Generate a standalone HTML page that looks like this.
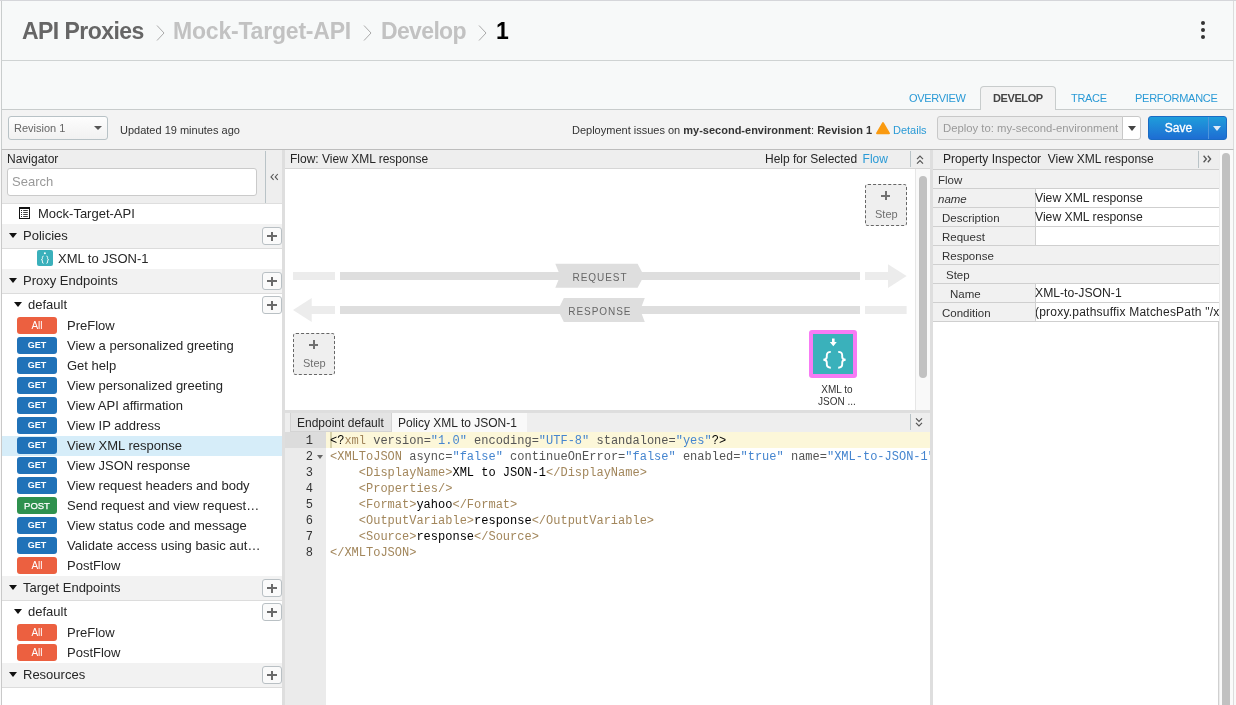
<!DOCTYPE html>
<html><head><meta charset="utf-8">
<style>
*{box-sizing:border-box;margin:0;padding:0}
html,body{width:1236px;height:705px;overflow:hidden;background:#f9f9f9;font-family:"Liberation Sans",sans-serif;color:#333}
.a{position:absolute;white-space:nowrap}
#page{position:absolute;left:0;top:0;width:1236px;height:705px;overflow:hidden;will-change:transform}
/* header */
#hdr{left:1px;top:0;width:1233px;height:61px;background:#f7f9f9;border-top:1px solid #d5d9d9;border-left:1px solid #c9cdcd;border-right:1px solid #dcdcdc;border-bottom:1px solid #cfd3d3}
.bc{top:18px;font-size:23px;font-weight:bold;line-height:26px}
.chev{top:25px;width:9px;height:16px}
#sub{left:1px;top:61px;width:1233px;height:49px;background:#f7f9f9;border-left:1px solid #c9cdcd;border-right:1px solid #dcdcdc;border-bottom:1px solid #c8cccc}
.tab{font-size:11px;color:#2a9ad6;top:91px;line-height:14px;letter-spacing:-0.3px}
#tb{left:1px;top:110px;width:1233px;height:40px;background:#f3f3f3;border-left:1px solid #c9cdcd;border-right:1px solid #dcdcdc;border-bottom:1px solid #bdbdbd}
.t11{font-size:11px;line-height:14px}
/* navigator */
#nav{left:1px;top:150px;width:281px;height:555px;background:#fff;border-left:1px solid #c9c9c9}
.navh{left:2px;top:150px;width:280px;height:54px;background:#eeeeee;border-bottom:1px solid #dedede}
.sec{left:2px;width:280px;height:25px;background:#f2f2f2;border-bottom:1px solid #dcdcdc}
.t13{font-size:13px;line-height:16px;color:#262626}
.tri{width:0;height:0;border-left:4px solid transparent;border-right:4px solid transparent;border-top:5px solid #111}
.plus{left:262px;width:20px;height:18px;border:1px solid #b9c0c4;border-radius:3px;background:#fafafa}
.plus:before{content:"";position:absolute;left:4px;top:7px;width:10px;height:2px;background:#6a6a6a}
.plus:after{content:"";position:absolute;left:8px;top:3.5px;width:2px;height:9px;background:#6a6a6a}
.bdg{left:17px;width:40px;height:17px;border-radius:3px;color:#fff;font-size:9px;font-weight:bold;text-align:center;line-height:17px}
.get{background:#2072b8}
.all{background:#ec6040;font-weight:normal;font-size:10px}
.post{background:#2f914e;font-weight:normal;font-size:9.5px;-webkit-text-stroke:0.25px #fff}
.item{left:67px;font-size:13px;line-height:16px;color:#262626}
.splt{background:#dedede}
/* flow */
.ph{background:#eeeeee;height:19px;border-bottom:1px solid #d6d6d6}
.t12{font-size:12px;line-height:15px;color:#262626}
.mono{font-family:"Liberation Mono",monospace;font-size:12px;line-height:16px;white-space:pre}
.tg{color:#a2865b}
.at{color:#555}
.st{color:#4585cf}
.tx{color:#000}
.pr{border-bottom:1px solid #cfcfcf;height:19px;left:933px;width:286px;background:#f1f1f1}
.pv{position:absolute;left:102px;top:0;width:184px;height:18px;background:#fff;border-left:1px solid #cfcfcf}
</style></head><body><div id="page">
<!-- HEADER -->
<div id="hdr" class="a"></div>
<div class="a" style="left:0;top:0;width:1236px;height:1px;background:#d5d6da"></div>
<div class="a bc" style="left:22px;color:#666;letter-spacing:-0.55px">API Proxies</div>
<svg class="a chev" style="left:156px" viewBox="0 0 9 16"><path d="M1 0.5 L8 8 L1 15.5" fill="none" stroke="#aaa" stroke-width="1"/></svg>
<div class="a bc" style="left:173px;color:#c2c2c2;letter-spacing:-0.2px">Mock-Target-API</div>
<svg class="a chev" style="left:363px" viewBox="0 0 9 16"><path d="M1 0.5 L8 8 L1 15.5" fill="none" stroke="#aaa" stroke-width="1"/></svg>
<div class="a bc" style="left:381px;color:#c2c2c2;letter-spacing:-0.65px">Develop</div>
<svg class="a chev" style="left:478px" viewBox="0 0 9 16"><path d="M1 0.5 L8 8 L1 15.5" fill="none" stroke="#aaa" stroke-width="1"/></svg>
<div class="a bc" style="left:496px;color:#000">1</div>
<div class="a" style="left:1201.3px;top:21.2px;width:3.5px;height:3.5px;border-radius:2px;background:#333"></div>
<div class="a" style="left:1201.3px;top:28.2px;width:3.5px;height:3.5px;border-radius:2px;background:#333"></div>
<div class="a" style="left:1201.3px;top:35.2px;width:3.5px;height:3.5px;border-radius:2px;background:#333"></div>
<div id="sub" class="a"></div>
<div class="a" style="left:980px;top:86px;width:76px;height:25px;background:#f3f3f3;border:1px solid #c8cccc;border-bottom:none;border-radius:4px 4px 0 0"></div>
<div class="a tab" style="left:909px">OVERVIEW</div>
<div class="a tab" style="left:993px;color:#444;font-weight:bold;letter-spacing:-0.4px">DEVELOP</div>
<div class="a tab" style="left:1071px">TRACE</div>
<div class="a tab" style="left:1135px;letter-spacing:-0.27px">PERFORMANCE</div>
<!-- TOOLBAR -->
<div id="tb" class="a"></div>
<div class="a" style="left:8px;top:116px;width:100px;height:24px;border:1px solid #b8c2c6;border-radius:3px;background:linear-gradient(#fdfdfd,#f1f1f1)"></div>
<div class="a t11" style="left:14px;top:121px;color:#666">Revision 1</div>
<div class="a tri" style="left:94px;top:126px;border-top-width:4px;border-top-color:#555"></div>
<div class="a t11" style="left:120px;top:122.5px;color:#333">Updated 19 minutes ago</div>
<div class="a t11" style="left:572px;top:122.5px;color:#333">Deployment issues on <b>my-second-environment</b>: <b>Revision 1</b></div>
<svg class="a" style="left:876px;top:122px" width="14" height="12.5" viewBox="0 0 14 12.5"><path d="M7 1 L13 11.3 L1 11.3 Z" fill="#fa9a10" stroke="#fa9a10" stroke-width="1.8" stroke-linejoin="round"/></svg>
<div class="a t11" style="left:893px;top:122.5px;color:#2a9ad6">Details</div>
<div class="a" style="left:937px;top:116px;width:186px;height:24px;border:1px solid #c8c8c8;border-radius:3px 0 0 3px;background:#ececec"></div>
<div class="a t11" style="left:943px;top:121px;color:#999;font-size:11.3px">Deploy to: my-second-environment</div>
<div class="a" style="left:1122px;top:116px;width:19px;height:24px;border:1px solid #c8c8c8;border-radius:0 3px 3px 0;background:#fff"></div>
<div class="a tri" style="left:1128px;top:126px;border-top-color:#444"></div>
<div class="a" style="left:1148px;top:116px;width:79px;height:24px;border-radius:3px;background:linear-gradient(#1f9ddb,#1e6dd3);border:1px solid #1a6bc4"></div>
<div class="a" style="left:1208px;top:117px;width:1px;height:22px;background:#4f95dc"></div>
<div class="a" style="left:1149px;top:121px;width:59px;text-align:center;font-size:12px;line-height:15px;color:#fff;-webkit-text-stroke:0.3px #fff">Save</div>
<div class="a tri" style="left:1213px;top:126px;border-top-color:#dfeaf7"></div>

<!-- NAVIGATOR -->
<div class="a" style="left:2px;top:150px;width:280px;height:555px;background:#fff"></div>
<div class="a" style="left:1px;top:150px;width:1px;height:555px;background:#c9c9c9"></div>
<div class="a navh"></div>
<div class="a t12" style="left:7px;top:152px">Navigator</div>
<div class="a" style="left:7px;top:168px;width:250px;height:28px;border:1px solid #cacaca;border-radius:3px;background:#fff"></div>
<div class="a t13" style="left:12px;top:174px;color:#999">Search</div>
<div class="a" style="left:265px;top:151px;width:1px;height:52px;background:#b9c3c7"></div>
<svg class="a" style="left:269px;top:173px" width="11" height="8" viewBox="0 0 11 8"><path d="M4.6 1 L2 3.9 L4.6 6.8 M8.8 1 L6.2 3.9 L8.8 6.8" fill="none" stroke="#555" stroke-width="1.1"/></svg>
<!-- tree -->
<svg class="a" style="left:19px;top:207px" width="11" height="12" viewBox="0 0 11 12"><rect x="0.5" y="0.5" width="10" height="11" fill="none" stroke="#111"/><rect x="0" y="0" width="11" height="2" fill="#111"/><path d="M2 3.5h1M2 5.5h1M2 7.5h1M2 9.5h1" stroke="#111" stroke-width="0.9"/><path d="M4.2 3.5h4.6M4.2 5.5h4.6M4.2 7.5h4.6M4.2 9.5h4.6" stroke="#111" stroke-width="0.8"/></svg>
<div class="a t13" style="left:38px;top:206px">Mock-Target-API</div>
<div class="a sec" style="top:224px"></div>
<div class="a tri" style="left:9px;top:233px"></div>
<div class="a t13" style="left:23px;top:228px">Policies</div>
<div class="a plus" style="top:227px"></div>
<svg class="a" style="left:37px;top:250px" width="16" height="16" viewBox="0 0 16 16"><rect width="16" height="16" rx="2" fill="#3ab0bb"/><circle cx="7.9" cy="3.3" r="1" fill="#fff"/><path d="M6.6 6.1 q-1.2 0 -1.2 1.2 v1.3 q0 1 -1 1.1 q1 0.1 1 1.1 v1.3 q0 1.2 1.2 1.2" fill="none" stroke="#fff" stroke-width="0.9"/><path d="M9.4 6.1 q1.2 0 1.2 1.2 v1.3 q0 1 1 1.1 q-1 0.1 -1 1.1 v1.3 q0 1.2 -1.2 1.2" fill="none" stroke="#fff" stroke-width="0.9"/></svg>
<div class="a t13" style="left:58px;top:251px">XML to JSON-1</div>
<div class="a sec" style="top:269px"></div>
<div class="a tri" style="left:9px;top:278px"></div>
<div class="a t13" style="left:23px;top:273px">Proxy Endpoints</div>
<div class="a plus" style="top:272px"></div>
<div class="a tri" style="left:14px;top:302px"></div>
<div class="a t13" style="left:28px;top:297px">default</div>
<div class="a plus" style="top:296px"></div>

<div class="a" style="left:2px;top:436px;width:280px;height:20px;background:#d6edf9"></div>
<div class="a bdg all" style="top:317px">All</div><div class="a item" style="top:318px">PreFlow</div>
<div class="a bdg get" style="top:337px">GET</div><div class="a item" style="top:338px">View a personalized greeting</div>
<div class="a bdg get" style="top:357px">GET</div><div class="a item" style="top:358px">Get help</div>
<div class="a bdg get" style="top:377px">GET</div><div class="a item" style="top:378px">View personalized greeting</div>
<div class="a bdg get" style="top:397px">GET</div><div class="a item" style="top:398px">View API affirmation</div>
<div class="a bdg get" style="top:417px">GET</div><div class="a item" style="top:418px">View IP address</div>
<div class="a bdg get" style="top:437px">GET</div><div class="a item" style="top:438px">View XML response</div>
<div class="a bdg get" style="top:457px">GET</div><div class="a item" style="top:458px">View JSON response</div>
<div class="a bdg get" style="top:477px">GET</div><div class="a item" style="top:478px">View request headers and body</div>
<div class="a bdg post" style="top:497px">POST</div><div class="a item" style="top:498px">Send request and view request…</div>
<div class="a bdg get" style="top:517px">GET</div><div class="a item" style="top:518px">View status code and message</div>
<div class="a bdg get" style="top:537px">GET</div><div class="a item" style="top:538px">Validate access using basic aut…</div>
<div class="a bdg all" style="top:557px">All</div><div class="a item" style="top:558px">PostFlow</div>

<div class="a sec" style="top:576px"></div>
<div class="a tri" style="left:9px;top:585px"></div>
<div class="a t13" style="left:23px;top:580px">Target Endpoints</div>
<div class="a plus" style="top:579px"></div>
<div class="a tri" style="left:14px;top:609px"></div>
<div class="a t13" style="left:28px;top:604px">default</div>
<div class="a plus" style="top:603px"></div>
<div class="a bdg all" style="top:624px">All</div><div class="a item" style="top:625px">PreFlow</div>
<div class="a bdg all" style="top:644px">All</div><div class="a item" style="top:645px">PostFlow</div>
<div class="a sec" style="top:663px"></div>
<div class="a tri" style="left:9px;top:672px"></div>
<div class="a t13" style="left:23px;top:667px">Resources</div>
<div class="a plus" style="top:666px"></div>

<div class="a splt" style="left:282px;top:150px;width:3px;height:555px"></div>

<!-- FLOW -->
<div class="a ph" style="left:285px;top:150px;width:645px"></div>
<div class="a t12" style="left:290px;top:152px">Flow: View XML response</div>
<div class="a t12" style="left:765px;top:152px">Help for Selected<span style="color:#2a9ad6;margin-left:5.5px">Flow</span></div>
<svg class="a" style="left:916px;top:155px" width="8" height="10" viewBox="0 0 8 10"><path d="M1 4.2 L4 1.2 L7 4.2 M1 8.6 L4 5.6 L7 8.6" fill="none" stroke="#555" stroke-width="1.2"/></svg>
<div class="a" style="left:910px;top:151px;width:1px;height:16px;background:#b9c3c7"></div>
<div class="a" style="left:285px;top:169px;width:645px;height:241px;background:#fff"></div>
<!-- flow diagram -->
<svg class="a" style="left:285px;top:169px" width="630" height="241" viewBox="285 169 630 241">
 <rect x="293" y="272" width="42" height="8" fill="#ececec"/>
 <rect x="340" y="272" width="520" height="8" fill="#dedede"/>
 <path d="M555.3 263.8 L637.6 263.8 L644 275.8 L637.6 287.8 L555.3 287.8 L560.2 275.8 Z" fill="#dedede"/>
 <path d="M865 272 L888 272 L888 264.2 L906.6 276 L888 288 L888 280 L865 280 Z" fill="#ececec"/>
 <path d="M311.7 298 L311.7 306 L335 306 L335 314 L311.7 314 L311.7 322 L293 310 Z" fill="#ececec"/>
 <rect x="340" y="306" width="520" height="8" fill="#dedede"/>
 <path d="M563.8 298 L644.8 298 L640.2 310 L644.8 322 L563.8 322 L558 310 Z" fill="#dedede"/>
 <rect x="865" y="306" width="41.6" height="8" fill="#ececec"/>
</svg>
<div class="a" style="left:572.5px;top:271.5px;font-size:10px;line-height:12px;letter-spacing:0.95px;color:#666">REQUEST</div>
<div class="a" style="left:568.3px;top:305.5px;font-size:10px;line-height:12px;letter-spacing:0.95px;color:#666">RESPONSE</div>
<!-- step boxes -->
<div class="a" style="left:865px;top:184px;width:42px;height:42px;border:1px dashed #666;border-radius:3px;background:#efefef"></div>
<div class="a" style="left:881px;top:194.5px;width:9px;height:2px;background:#707070"></div>
<div class="a" style="left:884.5px;top:191px;width:2px;height:9px;background:#707070"></div>
<div class="a t11" style="left:875px;top:207px;color:#707070">Step</div>
<div class="a" style="left:293px;top:333px;width:42px;height:42px;border:1px dashed #666;border-radius:3px;background:#efefef"></div>
<div class="a" style="left:309px;top:343.5px;width:9px;height:2px;background:#707070"></div>
<div class="a" style="left:312.5px;top:340px;width:2px;height:9px;background:#707070"></div>
<div class="a t11" style="left:303px;top:356px;color:#707070">Step</div>
<!-- policy icon -->
<div class="a" style="left:809px;top:330px;width:48px;height:48px;border-radius:3px;background:#f77bf5"></div>
<div class="a" style="left:813px;top:334px;width:40px;height:40px;background:#3ab1bb"></div>
<svg class="a" style="left:813px;top:334px" width="40" height="40" viewBox="0 0 40 40">
 <path d="M19 4.6 h2.6 v3.4 h2.2 l-3.5 4.2 l-3.5 -4.2 h2.2 z" fill="#fff"/>
 <path d="M17.8 17.9 q-4 0 -4 3.4 v1.8 q0 2.5 -3.4 2.7 q3.4 0.2 3.4 2.7 v1.8 q0 3.4 4 3.4" fill="none" stroke="#fff" stroke-width="1.9"/>
 <path d="M25.2 17.9 q4 0 4 3.4 v1.8 q0 2.5 3.4 2.7 q-3.4 0.2 -3.4 2.7 v1.8 q0 3.4 -4 3.4" fill="none" stroke="#fff" stroke-width="1.9"/>
</svg>
<div class="a" style="left:797px;top:384px;width:80px;text-align:center;font-size:10px;line-height:12px;color:#333">XML to<br>JSON ...</div>
<!-- scroll -->
<div class="a" style="left:915px;top:169px;width:15px;height:241px;background:#f9f9f9;border-left:1px solid #e6e6e6"></div>
<div class="a" style="left:919px;top:176px;width:8px;height:202px;border-radius:4px;background:#c1c1c1"></div>

<!-- EDITOR -->
<div class="a splt" style="left:285px;top:410px;width:645px;height:3px"></div>
<div class="a" style="left:285px;top:413px;width:645px;height:19px;background:#eeeeee"></div>
<div class="a" style="left:290px;top:413px;width:102px;height:19px;background:#e4e4e4;border:1px solid #d4d4d4;border-top:none"></div>
<div class="a t12" style="left:297px;top:416px">Endpoint default</div>
<div class="a" style="left:392px;top:413px;width:135px;height:19px;background:#f9f9f9"></div>
<div class="a t12" style="left:398px;top:416px">Policy XML to JSON-1</div>
<div class="a" style="left:910px;top:414px;width:1px;height:16px;background:#b9c3c7"></div>
<svg class="a" style="left:915px;top:417px" width="8" height="10" viewBox="0 0 8 10"><path d="M1 1.4 L4 4.4 L7 1.4 M1 5.8 L4 8.8 L7 5.8" fill="none" stroke="#555" stroke-width="1.2"/></svg>
<div class="a" style="left:285px;top:432px;width:41px;height:273px;background:#ebebeb"></div>
<div class="a" style="left:285px;top:432px;width:41px;height:16px;background:#dcdcdc"></div>
<div class="a" style="left:326px;top:432px;width:604px;height:16px;background:#fcf7d9"></div>
<div class="a" style="left:326px;top:448px;width:604px;height:257px;background:#fff"></div>

<div class="a mono" style="left:290px;top:433px;width:23px;text-align:right;color:#333">1
2
3
4
5
6
7
8</div>
<div class="a tri" style="left:317px;top:455px;border-left-width:3px;border-right-width:3px;border-top-width:4px;border-top-color:#666"></div>
<div class="a" style="left:330px;top:432px;width:2px;height:16px;background:#d6d1a9"></div>
<div class="a" style="left:326px;top:432px;width:604px;height:273px;overflow:hidden"><div class="mono" style="position:absolute;left:4px;top:1px"><span class="tx">&lt;?</span><span class="tg">xml</span> <span class="at">version=</span><span class="st">"1.0"</span> <span class="at">encoding=</span><span class="st">"UTF-8"</span> <span class="at">standalone=</span><span class="st">"yes"</span><span class="tx">?&gt;</span>
<span class="tg">&lt;XMLToJSON</span> <span class="at">async=</span><span class="st">"false"</span> <span class="at">continueOnError=</span><span class="st">"false"</span> <span class="at">enabled=</span><span class="st">"true"</span> <span class="at">name=</span><span class="st">"XML-to-JSON-1"</span><span class="tg">&gt;</span>
    <span class="tg">&lt;DisplayName&gt;</span><span class="tx">XML to JSON-1</span><span class="tg">&lt;/DisplayName&gt;</span>
    <span class="tg">&lt;Properties/&gt;</span>
    <span class="tg">&lt;Format&gt;</span><span class="tx">yahoo</span><span class="tg">&lt;/Format&gt;</span>
    <span class="tg">&lt;OutputVariable&gt;</span><span class="tx">response</span><span class="tg">&lt;/OutputVariable&gt;</span>
    <span class="tg">&lt;Source&gt;</span><span class="tx">response</span><span class="tg">&lt;/Source&gt;</span>
<span class="tg">&lt;/XMLToJSON&gt;</span></div></div>

<!-- PROPERTY INSPECTOR -->
<div class="a splt" style="left:930px;top:150px;width:3px;height:555px"></div>
<div class="a" style="left:933px;top:150px;width:286px;height:555px;background:#fff;border-right:1px solid #d0d0d0"></div>
<div class="a ph" style="left:933px;top:150px;width:286px;height:20px;border-bottom-color:#cfcfcf"></div>
<div class="a t12" style="left:943px;top:152px">Property Inspector&nbsp; View XML response</div>
<div class="a" style="left:1198px;top:151px;width:1px;height:17px;background:#b9c3c7"></div>
<svg class="a" style="left:1202px;top:155px" width="11" height="8" viewBox="0 0 11 8"><path d="M1.6 0.8 L4.4 4 L1.6 7.2 M5.8 0.8 L8.6 4 L5.8 7.2" fill="none" stroke="#555" stroke-width="1.3"/></svg>
<div class="a pr" style="top:170px"></div>
<div class="a t11" style="font-size:11.5px;left:938px;top:173px">Flow</div>
<div class="a pr" style="top:189px"><div class="pv"></div></div>
<div class="a t11" style="font-size:11.5px;left:938px;top:192px;font-style:italic">name</div>
<div class="a t12" style="font-size:12.2px;left:1035px;top:191px">View XML response</div>
<div class="a pr" style="top:208px"><div class="pv"></div></div>
<div class="a t11" style="font-size:11.5px;left:942px;top:211px">Description</div>
<div class="a t12" style="font-size:12.2px;left:1035px;top:210px">View XML response</div>
<div class="a pr" style="top:227px"><div class="pv"></div></div>
<div class="a t11" style="font-size:11.5px;left:942px;top:230px">Request</div>
<div class="a pr" style="top:246px"></div>
<div class="a t11" style="font-size:11.5px;left:942px;top:249px">Response</div>
<div class="a pr" style="top:265px"></div>
<div class="a t11" style="font-size:11.5px;left:946px;top:268px">Step</div>
<div class="a pr" style="top:284px"><div class="pv"></div></div>
<div class="a t11" style="font-size:11.5px;left:950px;top:287px">Name</div>
<div class="a t12" style="font-size:12.2px;left:1035px;top:286px">XML-to-JSON-1</div>
<div class="a pr" style="top:303px"><div class="pv" style="overflow:hidden"><div class="a t12" style="left:-1px;top:2px;letter-spacing:0.22px">(proxy.pathsuffix MatchesPath "/xml")</div></div></div>
<div class="a t11" style="font-size:11.5px;left:942px;top:306px">Condition</div>
<div class="a" style="left:1219px;top:150px;width:14px;height:555px;background:#fafafa;border-left:1px solid #ececec"></div>
<div class="a" style="left:1222px;top:153px;width:8px;height:560px;border-radius:4px;background:#c1c1c1"></div>
<div class="a" style="left:1233px;top:150px;width:1px;height:555px;background:#dcdcdc"></div>

</div></body></html>
